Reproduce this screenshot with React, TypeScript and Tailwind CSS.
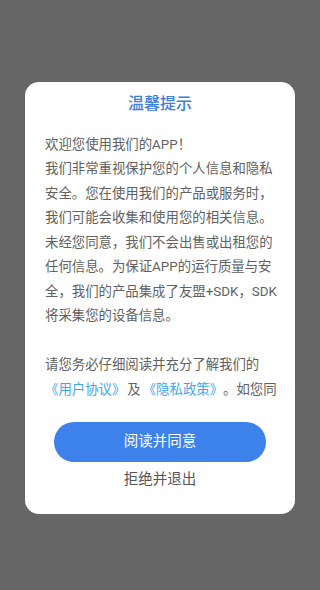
import React from "react";

const lines = [
  "欢迎您使用我们的APP！",
  "我们非常重视保护您的个人信息和隐私",
  "安全。您在使用我们的产品或服务时，",
  "我们可能会收集和使用您的相关信息。",
  "未经您同意，我们不会出售或出租您的",
  "任何信息。为保证APP的运行质量与安",
  "全，我们的产品集成了友盟+SDK，SDK",
  "将采集您的设备信息。",
];

export default function App() {
  return (
    <div
      className="w-[320px] h-[590px] bg-[#666666] pt-[82px] [text-spacing-trim:space-all]"
      style={{ fontFamily: 'Roboto, "Noto Sans CJK SC", sans-serif' }}
    >
      <div className="mx-auto w-[270px] bg-white rounded-[14px] pt-[10px] pb-[23px] flex flex-col items-center">
        <div className="text-[16px] leading-[24px] font-medium text-[#3b7de0]">温馨提示</div>
        <div className="mt-[16.75px] h-[263px] w-full overflow-hidden px-[20px] text-[13.4px] leading-[24.5px] text-[#616161]">
          {lines.map((l, i) => (
            <div key={i} className="whitespace-nowrap">{l}</div>
          ))}
          <div className="h-[24.5px]" />
          <div className="whitespace-nowrap">请您务必仔细阅读并充分了解我们的</div>
          <div className="whitespace-nowrap">
            <span className="text-[#3da6f2]">《用户协议》</span>
            <span className="mx-[2px]">及</span>
            <span className="text-[#3da6f2]">《隐私政策》</span>。如您同
          </div>
        </div>
        <button className="mt-[26px] w-[212px] h-[40px] rounded-full bg-[#3d82ea] text-white text-[14.5px] flex items-center justify-center">
          阅读并同意
        </button>
        <div className="mt-[7px] text-[14.5px] leading-[22px] text-[#555555]">拒绝并退出</div>
      </div>
    </div>
  );
}
